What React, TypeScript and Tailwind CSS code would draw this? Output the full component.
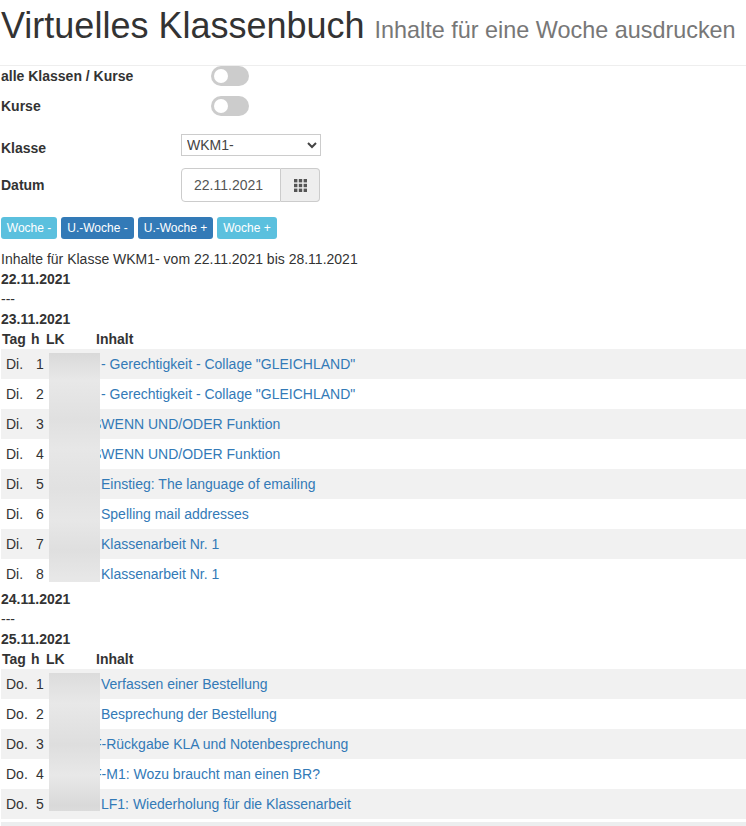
import React from "react";

type Row = { tag: string; h: number; text: string; shift?: string };

const week1: Row[] = [
  { tag: "Di.", h: 1, text: '- Gerechtigkeit - Collage "GLEICHLAND"' },
  { tag: "Di.", h: 2, text: '- Gerechtigkeit - Collage "GLEICHLAND"' },
  { tag: "Di.", h: 3, text: "SWENN UND/ODER Funktion", shift: "-ml-[9px]" },
  { tag: "Di.", h: 4, text: "SWENN UND/ODER Funktion", shift: "-ml-[9px]" },
  { tag: "Di.", h: 5, text: "Einstieg: The language of emailing" },
  { tag: "Di.", h: 6, text: "Spelling mail addresses" },
  { tag: "Di.", h: 7, text: "Klassenarbeit Nr. 1" },
  { tag: "Di.", h: 8, text: "Klassenarbeit Nr. 1" },
];

const week2: Row[] = [
  { tag: "Do.", h: 1, text: "Verfassen einer Bestellung" },
  { tag: "Do.", h: 2, text: "Besprechung der Bestellung" },
  { tag: "Do.", h: 3, text: "F-Rückgabe KLA und Notenbesprechung", shift: "-ml-[8px]" },
  { tag: "Do.", h: 4, text: "F-M1: Wozu braucht man einen BR?", shift: "-ml-[8px]" },
  { tag: "Do.", h: 5, text: "LF1: Wiederholung für die Klassenarbeit" },
];

function Toggle() {
  return (
    <span className="relative block w-[38px] h-[20px] rounded-full bg-[#ccc]">
      <span className="absolute left-[3px] top-[3px] w-[14px] h-[14px] rounded-full bg-white" />
    </span>
  );
}

function Lessons({ rows, blur }: { rows: Row[]; blur: string }) {
  return (
    <div className="relative">
      <div className="flex h-5 font-bold">
        <span className="w-[30px] pl-px">Tag</span>
        <span className="w-[15px]">h</span>
        <span className="w-[50px]">LK</span>
        <span>Inhalt</span>
      </div>
      {rows.map((r, i) => (
        <div key={i} className={`flex h-[30px] leading-5 py-[5px] ${i % 2 === 0 ? "bg-[#f1f1f1]" : "bg-white"}`}>
          <span className="w-[30px] pl-[5px]">{r.tag}</span>
          <span className="w-[15px] pl-[5px]">{r.h}</span>
          <span className="w-[50px]" />
          <a className={`pl-[5px] text-[#337ab7] whitespace-nowrap ${r.shift ?? ""}`}>{r.text}</a>
        </div>
      ))}
      <div className={`absolute left-[48px] top-[24px] w-[51px] ${blur}`} />
    </div>
  );
}

export default function App() {
  return (
    <div className="w-[746px] h-[826px] overflow-hidden bg-white text-[#333] text-[14px] leading-5 font-['Liberation_Sans',Arial,sans-serif]">
      <div className="h-[66px] border-b border-[#eee] whitespace-nowrap pl-px pt-[6px]">
        <h1 className="text-[36px] leading-10 font-medium">
          Virtuelles Klassenbuch <small className="text-[23.4px] font-normal text-[#777]">Inhalte für eine Woche ausdrucken</small>
        </h1>
      </div>
      <div className="pl-px">
        <div className="flex h-[30px] font-bold">
          <span className="w-[210px]">alle Klassen / Kurse</span>
          <Toggle />
        </div>
        <div className="flex h-[30px] font-bold">
          <span className="w-[210px]">Kurse</span>
          <Toggle />
        </div>
        <div className="flex items-center h-[22px] mt-[8px] font-bold">
          <span className="w-[180px] pt-[5px]">Klasse</span>
          <select className="w-[140px] h-[22px] border border-[#ccc] bg-white font-normal text-[#444] pl-[1px] text-[14px]">
            <option>WKM1-</option>
          </select>
        </div>
        <div className="flex items-center h-[34px] mt-[12px] font-bold">
          <span className="w-[180px]">Datum</span>
          <div className="flex w-[139px] h-[34px] font-normal text-[#555]">
            <span className="w-[100px] pl-[12px] leading-8 bg-white border border-[#ccc] rounded-l-[4px]">22.11.2021</span>
            <span className="w-[39px] flex items-center justify-center bg-[#eee] border border-l-0 border-[#ccc] rounded-r-[4px]">
              <svg width="13" height="13" viewBox="0 0 13 13" fill="#555">
                <rect x="0" y="0" width="3.4" height="3.4" />
                <rect x="4.8" y="0" width="3.4" height="3.4" />
                <rect x="9.6" y="0" width="3.4" height="3.4" />
                <rect x="0" y="4.8" width="3.4" height="3.4" />
                <rect x="4.8" y="4.8" width="3.4" height="3.4" />
                <rect x="9.6" y="4.8" width="3.4" height="3.4" />
                <rect x="0" y="9.6" width="3.4" height="3.4" />
                <rect x="4.8" y="9.6" width="3.4" height="3.4" />
                <rect x="9.6" y="9.6" width="3.4" height="3.4" />
              </svg>
            </span>
          </div>
        </div>
        <div className="flex gap-1 mt-[15px] text-[12px] text-white leading-[22px]">
          <span className="h-[22px] w-[56px] text-center rounded-[3px] bg-[#5bc0de]">Woche -</span>
          <span className="h-[22px] w-[73px] text-center rounded-[3px] bg-[#337ab7]">U.-Woche -</span>
          <span className="h-[22px] w-[75px] text-center rounded-[3px] bg-[#337ab7]">U.-Woche +</span>
          <span className="h-[22px] w-[60px] text-center rounded-[3px] bg-[#5bc0de]">Woche +</span>
        </div>
        <div className="mt-[10px]">Inhalte für Klasse WKM1- vom 22.11.2021 bis 28.11.2021</div>
        <div className="font-bold">22.11.2021</div>
        <div>---</div>
        <div className="font-bold">23.11.2021</div>
        <Lessons
          rows={week1}
          blur="h-[229px] bg-[linear-gradient(#d9d9d9_0%,#e8e8e8_12%,#e0e0e0_29%,#e7e7e7_42%,#e1e1e1_59%,#e7e7e7_73%,#dfdfdf_86%,#e8e8e8_100%)]"
        />
        <div className="font-bold">24.11.2021</div>
        <div>---</div>
        <div className="font-bold">25.11.2021</div>
        <Lessons
          rows={week2}
          blur="h-[138px] bg-[linear-gradient(#dcdcdc_0%,#e8e8e8_22%,#dedede_52%,#e8e8e8_74%,#d9d9d9_96%,#dcdcdc_100%)]"
        />
        <div className="h-[4px] mt-[3px] bg-[#eceeef]" />
      </div>
    </div>
  );
}
